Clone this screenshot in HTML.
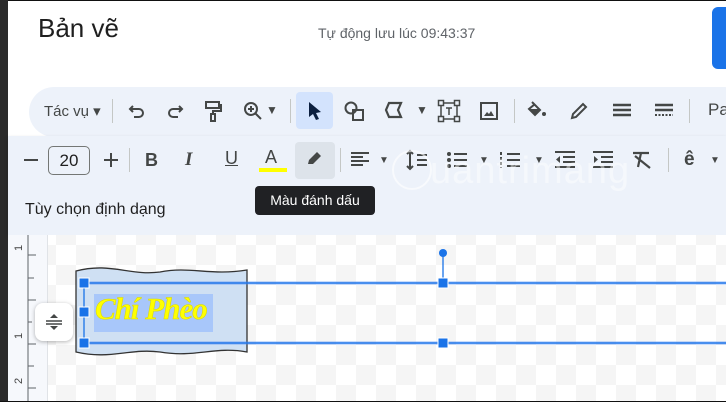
<!DOCTYPE html>
<html><head><meta charset="utf-8"><style>
*{margin:0;padding:0;box-sizing:border-box}
body{width:726px;height:402px;overflow:hidden;position:relative;background:#fff;font-family:"Liberation Sans",sans-serif;color:#444746}
.a{position:absolute}
.ic{position:absolute;color:#444746;font-size:18px;line-height:1;text-align:center}
svg{position:absolute;overflow:visible}
</style></head><body>
<div class="a" style="left:0;top:0;width:726px;height:1px;background:#111"></div>
<div class="a" style="left:0;top:0;width:8px;height:402px;background:#2b2b2b"></div>
<div class="a" style="left:38px;top:13px;font-size:26px;color:#1f1f1f">Bản vẽ</div>
<div class="a" style="left:318px;top:25px;font-size:14px;color:#5f6368">Tự động lưu lúc 09:43:37</div>
<div class="a" style="left:712px;top:7px;width:20px;height:62px;background:#1a73e8;border-radius:6px"></div>

<div class="a" style="left:29px;top:87px;width:720px;height:50px;background:#edf2fa;border-radius:25px"></div>
<div class="a" style="left:44px;top:102px;font-size:15px;color:#444746">Tác vụ ▾</div>
<div class="a" style="left:112px;top:99px;width:1px;height:24px;background:#c4c7c5"></div>
<svg style="left:128px;top:103px" width="18" height="16" viewBox="0 0 18 16"><path d="M5 3 L2 6 L5 9 M2 6 H11 A4 4 0 0 1 11 14 H6" fill="none" stroke="#444746" stroke-width="2"/></svg>
<svg style="left:166px;top:103px" width="18" height="16" viewBox="0 0 18 16"><path d="M13 3 L16 6 L13 9 M16 6 H7 A4 4 0 0 0 7 14 H12" fill="none" stroke="#444746" stroke-width="2"/></svg>
<svg style="left:204px;top:101px" width="18" height="20" viewBox="0 0 18 20"><path d="M2 1 H15 V7 H2 Z M15 4 H17 V10 H9 V13 M7 13 H11 V20 H7 Z" fill="none" stroke="#444746" stroke-width="2"/></svg>
<svg style="left:243px;top:101px" width="20" height="20" viewBox="0 0 20 20"><circle cx="8" cy="8" r="6" fill="none" stroke="#444746" stroke-width="2"/><path d="M12.5 12.5 L18 18 M5 8 H11 M8 5 V11" stroke="#444746" stroke-width="2"/></svg>
<div class="ic" style="left:266px;top:104px;font-size:12px">▼</div>
<div class="a" style="left:290px;top:99px;width:1px;height:24px;background:#c4c7c5"></div>
<div class="a" style="left:296px;top:92px;width:37px;height:37px;background:#d3e3fd;border-radius:4px"></div>
<svg style="left:308px;top:101px" width="14" height="20" viewBox="0 0 14 20"><path d="M1 1 L13 11 L8 12 L11 18 L8 19 L5 13 L1 16 Z" fill="#0b1f3f"/></svg>
<svg style="left:344px;top:101px" width="22" height="20" viewBox="0 0 22 20"><circle cx="7" cy="7" r="5.5" fill="none" stroke="#444746" stroke-width="2"/><rect x="9" y="9" width="10" height="10" fill="none" stroke="#444746" stroke-width="2"/></svg>
<svg style="left:385px;top:102px" width="18" height="16" viewBox="0 0 18 16"><path d="M4 1 H16 L13 8 L16 15 H4 L1 8 Z" fill="none" stroke="#444746" stroke-width="2.2"/></svg>
<div class="ic" style="left:416px;top:104px;font-size:12px">▼</div>
<svg style="left:438px;top:100px" width="22" height="22" viewBox="0 0 22 22"><rect x="3" y="3" width="16" height="16" fill="none" stroke="#444746" stroke-width="1.5"/><rect x="0.5" y="0.5" width="5" height="5" fill="#edf2fa" stroke="#444746" stroke-width="1.5"/><rect x="16.5" y="0.5" width="5" height="5" fill="#edf2fa" stroke="#444746" stroke-width="1.5"/><rect x="0.5" y="16.5" width="5" height="5" fill="#edf2fa" stroke="#444746" stroke-width="1.5"/><rect x="16.5" y="16.5" width="5" height="5" fill="#edf2fa" stroke="#444746" stroke-width="1.5"/><path d="M8 8 H14 M11 8 V15" stroke="#444746" stroke-width="1.5"/></svg>
<svg style="left:480px;top:102px" width="18" height="18" viewBox="0 0 18 18"><rect x="1" y="1" width="16" height="16" fill="none" stroke="#444746" stroke-width="2"/><path d="M4 14 L7 10 L9 12 L11 9 L14 14 Z" fill="#444746"/></svg>
<div class="a" style="left:514px;top:99px;width:1px;height:24px;background:#c4c7c5"></div>
<svg style="left:528px;top:101px" width="20" height="18" viewBox="0 0 20 18"><path d="M4 1 L12 9 L7 14 L1 8 L7 3" fill="none" stroke="#444746" stroke-width="2"/><path d="M2 8 H12 L7 13 Z" fill="#444746"/><circle cx="16" cy="13" r="2" fill="#444746"/></svg>
<svg style="left:570px;top:102px" width="18" height="18" viewBox="0 0 18 18"><path d="M2 16 L3 12 L13 2 L16 5 L6 15 Z" fill="none" stroke="#444746" stroke-width="2"/></svg>
<svg style="left:612px;top:103px" width="20" height="16" viewBox="0 0 20 16"><path d="M1 2 H19 M1 7 H19 M1 12 H19" stroke="#444746" stroke-width="2.5"/></svg>
<svg style="left:654px;top:103px" width="20" height="16" viewBox="0 0 20 16"><path d="M1 2 H19 M1 7 H19" stroke="#444746" stroke-width="2.5"/><path d="M1 12 H19" stroke="#444746" stroke-width="2" stroke-dasharray="2 1.5"/></svg>
<div class="a" style="left:689px;top:99px;width:1px;height:24px;background:#c4c7c5"></div>
<div class="a" style="left:708px;top:100px;font-size:17px;color:#444746">Pa</div>

<div class="a" style="left:8px;top:136px;width:718px;height:99px;background:#edf2fa;box-shadow:0 2px 4px rgba(0,0,0,.18)"></div>
<svg style="left:24px;top:159px" width="14" height="2"><path d="M0 1 H14" stroke="#444746" stroke-width="2"/></svg>
<div class="a" style="left:48px;top:146px;width:42px;height:29px;border:1px solid #747775;border-radius:5px;font-size:17px;text-align:center;line-height:27px;color:#1f1f1f">20</div>
<svg style="left:104px;top:153px" width="14" height="14"><path d="M0 7 H14 M7 0 V14" stroke="#444746" stroke-width="2"/></svg>
<div class="a" style="left:129px;top:148px;width:1px;height:24px;background:#c4c7c5"></div>
<div class="ic" style="left:145px;top:151px;font-weight:bold;font-size:18px">B</div>
<div class="ic" style="left:185px;top:150px;font-style:italic;font-size:19px;font-family:'Liberation Serif',serif;font-weight:bold">I</div>
<div class="ic" style="left:225px;top:149px;font-size:18px;text-decoration:underline">U</div>
<div class="ic" style="left:265px;top:148px;font-size:18px">A</div>
<div class="a" style="left:259px;top:168px;width:28px;height:4px;background:#ffff00"></div>
<div class="a" style="left:295px;top:142px;width:40px;height:37px;background:#dde3ea;border-radius:4px"></div>
<svg style="left:306px;top:151px" width="18" height="16" viewBox="0 0 18 16"><path d="M2 13 L3 9 L11 1 L15 5 L7 13 Z" fill="#444746"/></svg>
<div class="a" style="left:340px;top:148px;width:1px;height:24px;background:#c4c7c5"></div>
<svg style="left:351px;top:152px" width="18" height="16"><path d="M0 1 H18 M0 5 H12 M0 9 H18 M0 13 H12" stroke="#444746" stroke-width="2"/></svg>
<div class="ic" style="left:379px;top:156px;font-size:10px">▼</div>
<svg style="left:405px;top:150px" width="22" height="20"><path d="M5 1 V19 M2 4 L5 1 L8 4 M2 16 L5 19 L8 16 M12 5 H22 M12 10 H22 M12 15 H22" stroke="#444746" stroke-width="2" fill="none"/></svg>
<svg style="left:447px;top:152px" width="20" height="16"><circle cx="2" cy="2" r="2" fill="#444746"/><circle cx="2" cy="8" r="2" fill="#444746"/><circle cx="2" cy="14" r="2" fill="#444746"/><path d="M7 2 H20 M7 8 H20 M7 14 H20" stroke="#444746" stroke-width="2"/></svg>
<div class="ic" style="left:479px;top:156px;font-size:10px">▼</div>
<svg style="left:500px;top:152px" width="20" height="16"><path d="M1 0 V16" stroke="#444746" stroke-width="2" stroke-dasharray="3 2"/><path d="M7 2 H20 M7 8 H20 M7 14 H20" stroke="#444746" stroke-width="2"/></svg>
<div class="ic" style="left:534px;top:156px;font-size:10px">▼</div>
<svg style="left:555px;top:151px" width="20" height="18"><path d="M0 1 H20 M8 6 H20 M8 11 H20 M0 16 H20" stroke="#444746" stroke-width="2"/><path d="M5 5 L1 8.5 L5 12 Z" fill="#444746"/></svg>
<svg style="left:593px;top:151px" width="20" height="18"><path d="M0 1 H20 M8 6 H20 M8 11 H20 M0 16 H20" stroke="#444746" stroke-width="2"/><path d="M1 5 L5 8.5 L1 12 Z" fill="#444746"/></svg>
<svg style="left:632px;top:151px" width="20" height="18"><path d="M1 2 H17 M9 2 L6 16 M3 5 L18 17" stroke="#444746" stroke-width="2.2"/></svg>
<div class="a" style="left:668px;top:148px;width:1px;height:24px;background:#c4c7c5"></div>
<div class="ic" style="left:684px;top:150px;font-size:19px;font-weight:bold">ê</div>
<div class="ic" style="left:710px;top:156px;font-size:10px">▼</div>
<div class="a" style="left:25px;top:201px;font-size:16px;color:#1f1f1f">Tùy chọn định dạng</div>
<div class="a" style="left:392px;top:150px;width:40px;height:40px;border:2px solid rgba(255,255,255,.6);border-radius:50%"></div>
<div class="a" style="left:430px;top:150px;font-size:38px;color:rgba(255,255,255,.45);letter-spacing:1px">uantrimang</div>

<div class="a" style="left:255px;top:186px;width:120px;height:29px;background:#202124;border-radius:4px;color:#fff;font-size:14px;text-align:center;line-height:29px">Màu đánh dấu</div>

<div class="a" style="left:8px;top:235px;width:718px;height:166px;background-color:#fff;background-image:conic-gradient(#f5f5f5 25%,#fff 0 50%,#f5f5f5 0 75%,#fff 0);background-size:40px 40px;background-position:8px 10px"></div>
<div class="a" style="left:8px;top:235px;width:40px;height:166px;background:#f6f8fc;border-right:1px solid #e0e3e7"></div>
<svg style="left:8px;top:235px" width="40" height="166"><g stroke="#5f6368" stroke-width="1">
<path d="M20 0 V166"/><path d="M20 20 H28 M20 43 H26 M20 65 H28 M20 87 H24 M20 109 H28 M20 131 H26 M20 153 H28"/></g>
<text x="16" y="22" font-size="11" fill="#444" transform="rotate(-90 12 20)" font-family="Liberation Sans">1</text>
<text x="16" y="110" font-size="11" fill="#444" transform="rotate(-90 12 108)" font-family="Liberation Sans">1</text>
<text x="16" y="155" font-size="11" fill="#444" transform="rotate(-90 12 153)" font-family="Liberation Sans">2</text>
</svg>
<svg style="left:0;top:0" width="726" height="402">
<path d="M76 271 C110 262 130 276 160 272 C190 266 210 276 247 270 V352 C215 346 195 358 160 352 C130 348 110 360 76 352 Z" fill="#cfe0f3" stroke="#333" stroke-width="1.3"/>
<rect x="94" y="294" width="119" height="38" fill="#a8c7fa"/>
<path d="M84 283 H726 M84 343 H726" stroke="#4285f4" stroke-width="3" opacity=".55"/>
<path d="M84 283 H726 M84 343 H726 M84 283 V343 M443 253 V283" stroke="#1a73e8" stroke-width="1.3"/>
<circle cx="443" cy="253" r="4" fill="#1a73e8"/>
<g fill="#1a73e8" stroke="#fff" stroke-width="1"><rect x="79" y="278" width="10" height="10"/><rect x="79" y="307" width="10" height="10"/><rect x="79" y="338" width="10" height="10"/><rect x="438" y="278" width="10" height="10"/><rect x="438" y="338" width="10" height="10"/></g>
</svg>
<div class="a" style="left:95px;top:291px;font-size:31px;font-weight:bold;font-style:italic;color:#ffff00;font-family:'Liberation Serif',serif;letter-spacing:-1px;-webkit-text-stroke:.5px #d8d800">Chí Phèo</div>
<div class="a" style="left:35px;top:303px;width:38px;height:38px;background:#fff;border-radius:8px;box-shadow:0 1px 4px rgba(0,0,0,.3)"></div>
<svg style="left:44px;top:312px" width="20" height="20"><path d="M6 6 L10 2 L14 6 Z M6 14 L10 18 L14 14 Z" fill="#444746"/><path d="M2 9 H18 M2 12 H18" stroke="#444746" stroke-width="1.5"/></svg>
<div class="a" style="left:0;top:401px;width:726px;height:1px;background:#111"></div>
</body></html>
